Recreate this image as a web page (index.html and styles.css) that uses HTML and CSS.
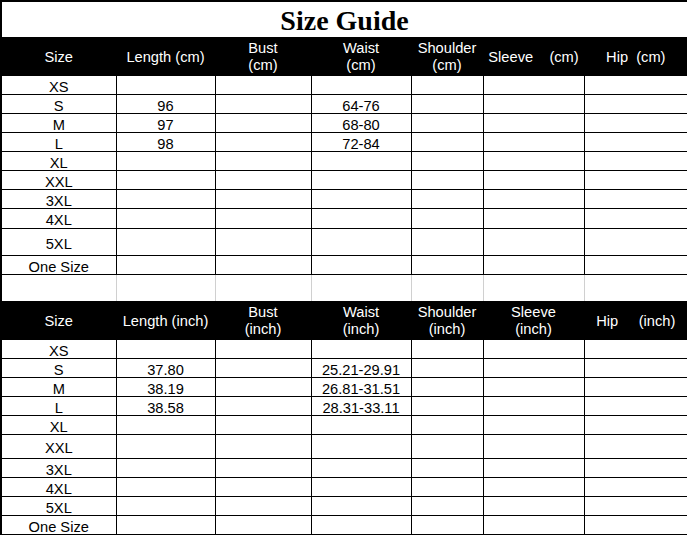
FILE: index.html
```html
<!DOCTYPE html>
<html>
<head>
<meta charset="utf-8">
<title>Size Guide</title>
<link rel="stylesheet" href="styles.css">
</head>
<body>
<table class="guide">
  <colgroup>
    <col class="c1"><col class="c2"><col class="c3"><col class="c4"><col class="c5"><col class="c6"><col class="c7">
  </colgroup>
  <tr class="r-title"><td colspan="7" class="title">Size Guide</td></tr>
  <tr class="r-head">
    <th>Size</th>
    <th>Length (cm)</th>
    <th>Bust<br>(cm)</th>
    <th>Waist<br>(cm)</th>
    <th>Shoulder<br>(cm)</th>
    <th>Sleeve&nbsp;&nbsp;&nbsp;&nbsp;(cm)</th>
    <th>Hip&nbsp;&nbsp;(cm)</th>
  </tr>
  <tr class="h19"><td>XS</td><td></td><td></td><td></td><td></td><td></td><td></td></tr>
  <tr class="h19"><td>S</td><td>96</td><td></td><td>64-76</td><td></td><td></td><td></td></tr>
  <tr class="h19"><td>M</td><td>97</td><td></td><td>68-80</td><td></td><td></td><td></td></tr>
  <tr class="h19"><td>L</td><td>98</td><td></td><td>72-84</td><td></td><td></td><td></td></tr>
  <tr class="h19"><td>XL</td><td></td><td></td><td></td><td></td><td></td><td></td></tr>
  <tr class="h19"><td>XXL</td><td></td><td></td><td></td><td></td><td></td><td></td></tr>
  <tr class="h19"><td>3XL</td><td></td><td></td><td></td><td></td><td></td><td></td></tr>
  <tr class="h20"><td>4XL</td><td></td><td></td><td></td><td></td><td></td><td></td></tr>
  <tr class="h27"><td>5XL</td><td></td><td></td><td></td><td></td><td></td><td></td></tr>
  <tr class="h19"><td>One Size</td><td></td><td></td><td></td><td></td><td></td><td></td></tr>
  <tr class="r-sep"><td></td><td></td><td></td><td></td><td></td><td></td><td></td></tr>
  <tr class="r-head">
    <th>Size</th>
    <th>Length (inch)</th>
    <th>Bust<br>(inch)</th>
    <th>Waist<br>(inch)</th>
    <th>Shoulder<br>(inch)</th>
    <th>Sleeve<br>(inch)</th>
    <th>Hip&nbsp;&nbsp;&nbsp;&nbsp;&nbsp;(inch)</th>
  </tr>
  <tr class="h19"><td>XS</td><td></td><td></td><td></td><td></td><td></td><td></td></tr>
  <tr class="h19"><td>S</td><td>37.80</td><td></td><td>25.21-29.91</td><td></td><td></td><td></td></tr>
  <tr class="h19"><td>M</td><td>38.19</td><td></td><td>26.81-31.51</td><td></td><td></td><td></td></tr>
  <tr class="h19"><td>L</td><td>38.58</td><td></td><td>28.31-33.11</td><td></td><td></td><td></td></tr>
  <tr class="h19"><td>XL</td><td></td><td></td><td></td><td></td><td></td><td></td></tr>
  <tr class="h24"><td>XXL</td><td></td><td></td><td></td><td></td><td></td><td></td></tr>
  <tr class="h19"><td>3XL</td><td></td><td></td><td></td><td></td><td></td><td></td></tr>
  <tr class="h19"><td>4XL</td><td></td><td></td><td></td><td></td><td></td><td></td></tr>
  <tr class="h19"><td>5XL</td><td></td><td></td><td></td><td></td><td></td><td></td></tr>
  <tr class="h19"><td>One Size</td><td></td><td></td><td></td><td></td><td></td><td></td></tr>
</table>
</body>
</html>
```
FILE: styles.css
```css
html, body {
  margin: 0;
  padding: 0;
  background: #ffffff;
}

.guide {
  width: 687px;
  table-layout: fixed;
  border-collapse: collapse;
  border: 2px solid #000;
  font-family: "Liberation Sans", Arial, sans-serif;
  font-size: 14.67px;
  color: #000;
}

.c1 { width: 115px; }
.c2 { width: 99px; }
.c3 { width: 96px; }
.c4 { width: 100px; }
.c5 { width: 72px; }
.c6 { width: 101px; }
.c7 { width: 104px; }

.guide td,
.guide th {
  border: 1px solid #000;
  padding: 4px 0 0 0;
  line-height: 14px;
  text-align: center;
  vertical-align: middle;
  white-space: nowrap;
  overflow: hidden;
}

.guide .title {
  padding: 3px 0 0 0;
  font-family: "Liberation Serif", "Times New Roman", serif;
  font-weight: bold;
  font-size: 28px;
  line-height: 29px;
  background: #fff;
}

.r-title { height: 36px; }

.r-head { height: 38px; }

.guide th {
  background: #000;
  color: #fff;
  font-weight: normal;
  line-height: 17px;
  padding: 2px 0 0 0;
}

.h19 { height: 19px; }
.h20 { height: 20px; }
.h24 { height: 24px; }
.h27 { height: 27px; }

.r-sep { height: 27px; }
.r-sep td {
  border-left-color: #d0d0d0;
  border-right-color: #d0d0d0;
}
.r-sep td:first-child { border-left: 2px solid #000; }
.r-sep td:last-child { border-right: 2px solid #000; }
```
